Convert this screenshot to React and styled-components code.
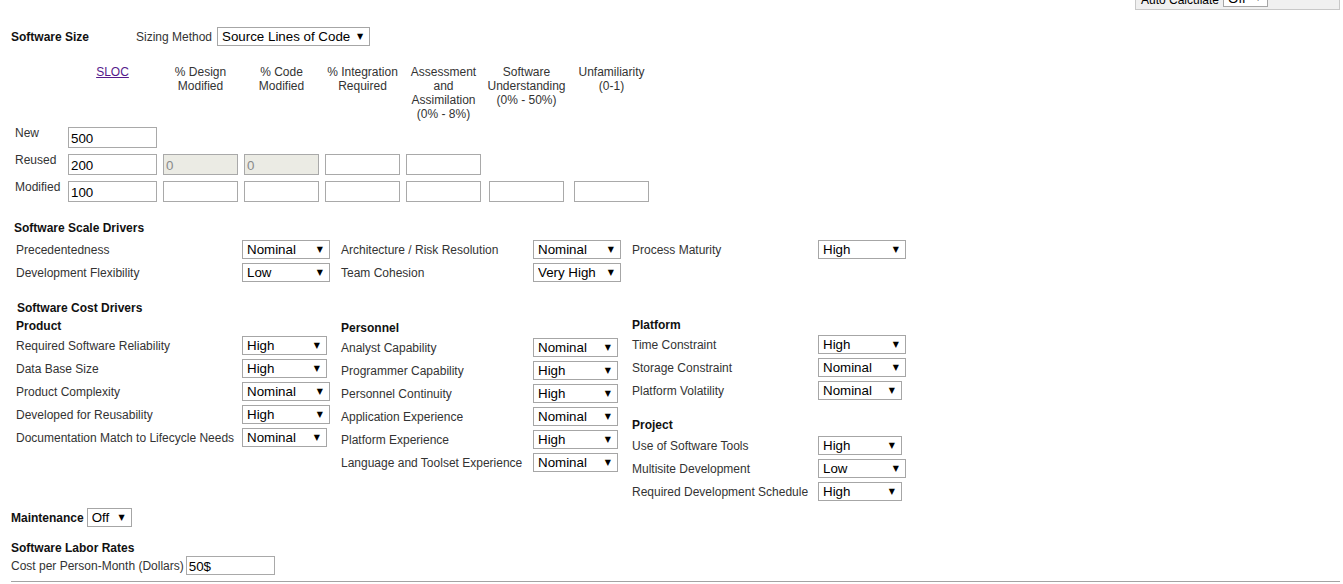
import React from "react";
import styled, { createGlobalStyle } from "styled-components";

const GlobalStyle = createGlobalStyle`
  html, body {
    margin: 0;
    padding: 0;
    background: #fff;
  }
  body {
    font-family: "Liberation Sans", Arial, sans-serif;
    font-size: 12px;
    color: #333;
  }
`;

const Page = styled.div`
  position: relative;
  box-sizing: border-box;
  min-height: 584px;
  padding: 27px 3px 0 11px;
  overflow: hidden;
`;

const AutoPanel = styled.div`
  position: absolute;
  top: -14px;
  right: 3px;
  width: 205px;
  height: 24px;
  box-sizing: border-box;
  display: flex;
  align-items: flex-end;
  gap: 4px;
  padding: 0 0 2px 5px;
  background: #f0f0f0;
  border: 1px solid #c8c8c8;
  color: #000;
  font-size: 12px;
`;

const Bold = styled.span`
  font-weight: bold;
  color: #111;
  font-size: 12px;
  line-height: 14px;
`;

const SizeHeader = styled.div`
  display: flex;
  align-items: center;
  height: 19px;
`;

const SizeTitle = styled(Bold)`
  width: 125px;
`;

const SizingLabel = styled.span`
  margin-right: 5px;
`;

const SelectWrap = styled.span`
  position: relative;
  display: inline-block;
  width: ${(p) => p.$w}px;
  height: ${(p) => p.$h || 19}px;
  flex: none;

  &::after {
    content: "▼";
    position: absolute;
    right: 7px;
    top: 50%;
    transform: translateY(-52%);
    font-family: "DejaVu Sans", sans-serif;
    font-size: 8px;
    color: #000;
    pointer-events: none;
  }
`;

const NativeSelect = styled.select`
  appearance: none;
  -webkit-appearance: none;
  width: 100%;
  height: 100%;
  box-sizing: border-box;
  margin: 0;
  padding: 0 0 0 4px;
  border: 1px solid #a6a6a6;
  border-radius: 0;
  background: #fff;
  color: #000;
  font-family: "Liberation Sans", Arial, sans-serif;
  font-size: 13.33px;
`;

const Select = ({ value, w, h }) => (
  <SelectWrap $w={w} $h={h}>
    <NativeSelect defaultValue={value}>
      <option>{value}</option>
    </NativeSelect>
  </SelectWrap>
);

const SizeGrid = styled.div`
  display: grid;
  grid-template-columns: 57px 95px 81px 81px 81px 83px 85px 75px;
  grid-auto-rows: 21px;
  grid-template-rows: 56px;
  row-gap: 6px;
  margin-top: 19px;
`;

const ColHead = styled.div`
  width: ${(p) => p.$w || 75}px;
  display: flex;
  justify-content: center;
  text-align: center;
  line-height: 14px;
  white-space: nowrap;
`;

const SlocLink = styled.a`
  color: #551a8b;
  text-decoration: underline;
`;

const RowLabel = styled.span`
  padding-left: 4px;
  line-height: 13px;
  align-self: start;
`;

const Field = styled.input`
  width: ${(p) => p.$w || 75}px;
  height: ${(p) => p.$h || 21}px;
  box-sizing: border-box;
  margin: 0;
  padding: 1px 2px 0;
  border: 1px solid #a9a9a9;
  background: ${(p) => (p.disabled ? "#ebebe4" : "#fff")};
  color: ${(p) => (p.disabled ? "#8a8a8a" : "#000")};
  font-family: "Liberation Sans", Arial, sans-serif;
  font-size: 13.33px;
`;

const SectionTitle = styled(Bold)`
  display: block;
  margin-top: ${(p) => p.$top ?? 19}px;
  padding-left: ${(p) => p.$indent ?? 3}px;
`;

const Columns = styled.div`
  display: grid;
  grid-template-columns: 325px 291px auto;
  align-items: start;
  margin-left: 5px;
  margin-top: ${(p) => p.$top || 0}px;
`;

const Column = styled.div`
  display: flex;
  flex-direction: column;
  padding-top: ${(p) => p.$pad || 0}px;
`;

const GroupTitle = styled(Bold)`
  display: block;
  margin-top: ${(p) => p.$top || 0}px;
  margin-bottom: ${(p) => p.$bottom ?? 5}px;
`;

const DriverList = styled.div`
  display: grid;
  grid-template-columns: ${(p) => p.$label}px auto;
  grid-auto-rows: 19px;
  row-gap: 4px;
  align-items: center;
`;

const DriverLabel = styled.span`
  white-space: nowrap;
  line-height: 14px;
`;

const Drivers = ({ label, items }) => (
  <DriverList $label={label}>
    {items.map(([name, value, w]) => (
      <React.Fragment key={name}>
        <DriverLabel>{name}</DriverLabel>
        <Select value={value} w={w} />
      </React.Fragment>
    ))}
  </DriverList>
);

const InlineRow = styled.div`
  display: flex;
  align-items: center;
  gap: ${(p) => p.$gap || 0}px;
  margin-top: ${(p) => p.$top || 0}px;
`;

const Rule = styled.div`
  margin-top: 6px;
  border-top: 1px solid #a3a3a3;
  height: 3px;
`;

const sizeCols = [89, 75, 75, 75, 75, 75, 75];

export default function App() {
  return (
    <>
      <GlobalStyle />
      <Page>
        <AutoPanel>
          <span>Auto Calculate</span>
          <Select value="Off" w={45} h={18} />
        </AutoPanel>

        <SizeHeader>
          <SizeTitle>Software Size</SizeTitle>
          <SizingLabel>Sizing Method</SizingLabel>
          <Select value="Source Lines of Code" w={153} h={19} />
        </SizeHeader>

        <SizeGrid>
          <span />
          <ColHead $w={89}>
            <SlocLink href="#">SLOC</SlocLink>
          </ColHead>
          <ColHead>
            % Design
            <br />
            Modified
          </ColHead>
          <ColHead>
            % Code
            <br />
            Modified
          </ColHead>
          <ColHead>
            % Integration
            <br />
            Required
          </ColHead>
          <ColHead>
            Assessment
            <br />
            and
            <br />
            Assimilation
            <br />
            (0% - 8%)
          </ColHead>
          <ColHead>
            Software
            <br />
            Understanding
            <br />
            (0% - 50%)
          </ColHead>
          <ColHead>
            Unfamiliarity
            <br />
            (0-1)
          </ColHead>

          <RowLabel>New</RowLabel>
          <Field $w={89} defaultValue="500" />
          <span />
          <span />
          <span />
          <span />
          <span />
          <span />

          <RowLabel>Reused</RowLabel>
          <Field $w={89} defaultValue="200" />
          <Field disabled defaultValue="0" />
          <Field disabled defaultValue="0" />
          <Field />
          <Field />
          <span />
          <span />

          <RowLabel>Modified</RowLabel>
          {sizeCols.map((w, i) => (
            <Field key={i} $w={w} defaultValue={i === 0 ? "100" : ""} />
          ))}
        </SizeGrid>

        <SectionTitle $indent={3}>Software Scale Drivers</SectionTitle>
        <Columns $top={5}>
          <Drivers
            label={226}
            items={[
              ["Precedentedness", "Nominal", 88],
              ["Development Flexibility", "Low", 88],
            ]}
          />
          <Drivers
            label={192}
            items={[
              ["Architecture / Risk Resolution", "Nominal", 88],
              ["Team Cohesion", "Very High", 88],
            ]}
          />
          <Drivers label={186} items={[["Process Maturity", "High", 88]]} />
        </Columns>

        <SectionTitle $indent={6}>Software Cost Drivers</SectionTitle>
        <Columns>
          <Column $pad={4}>
            <GroupTitle $bottom={3}>Product</GroupTitle>
            <Drivers
              label={226}
              items={[
                ["Required Software Reliability", "High", 85],
                ["Data Base Size", "High", 85],
                ["Product Complexity", "Nominal", 88],
                ["Developed for Reusability", "High", 88],
                ["Documentation Match to Lifecycle Needs", "Nominal", 85],
              ]}
            />
          </Column>
          <Column $pad={6}>
            <GroupTitle $bottom={3}>Personnel</GroupTitle>
            <Drivers
              label={192}
              items={[
                ["Analyst Capability", "Nominal", 85],
                ["Programmer Capability", "High", 85],
                ["Personnel Continuity", "High", 85],
                ["Application Experience", "Nominal", 85],
                ["Platform Experience", "High", 85],
                ["Language and Toolset Experience", "Nominal", 85],
              ]}
            />
          </Column>
          <Column $pad={3}>
            <GroupTitle $bottom={3}>Platform</GroupTitle>
            <Drivers
              label={186}
              items={[
                ["Time Constraint", "High", 88],
                ["Storage Constraint", "Nominal", 88],
                ["Platform Volatility", "Nominal", 84],
              ]}
            />
            <GroupTitle $top={18} $bottom={4}>
              Project
            </GroupTitle>
            <Drivers
              label={186}
              items={[
                ["Use of Software Tools", "High", 84],
                ["Multisite Development", "Low", 88],
                ["Required Development Schedule", "High", 84],
              ]}
            />
          </Column>
        </Columns>

        <InlineRow $top={7} $gap={3}>
          <Bold>Maintenance</Bold>
          <Select value="Off" w={45} h={19} />
        </InlineRow>

        <SectionTitle $indent={0} $top={14}>
          Software Labor Rates
        </SectionTitle>
        <InlineRow $top={1} $gap={2}>
          <span>Cost per Person-Month (Dollars)</span>
          <Field $w={89} $h={19} defaultValue="50$" />
        </InlineRow>
        <Rule />
      </Page>
    </>
  );
}
